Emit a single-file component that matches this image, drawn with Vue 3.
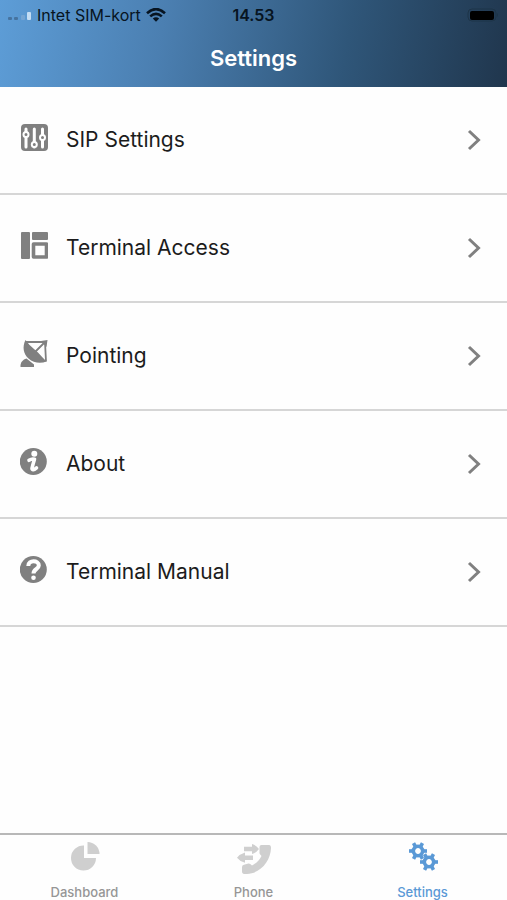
<script setup>
import { ref } from 'vue'

const items = [
  { id: 'sip', label: 'SIP Settings' },
  { id: 'access', label: 'Terminal Access' },
  { id: 'pointing', label: 'Pointing' },
  { id: 'about', label: 'About' },
  { id: 'manual', label: 'Terminal Manual' },
]
const tabs = [
  { id: 'dashboard', label: 'Dashboard' },
  { id: 'phone', label: 'Phone' },
  { id: 'settings', label: 'Settings' },
]
const active = ref('settings')
const gears = [{ x: 13, y: 9 }, { x: 24, y: 20 }]
const teeth = [0, 60, 120, 180, 240, 300]
</script>

<template>
  <div class="screen">
    <header class="top">
      <div class="status">
        <div class="carrier">
          <svg class="signal" width="24" height="12" viewBox="0 0 24 12" aria-hidden="true">
            <rect x="0" y="8" width="4" height="3" rx="1" fill="#46739f" />
            <rect x="6" y="8" width="4" height="3" rx="1" fill="#46739f" />
            <rect x="13" y="6" width="4" height="5" rx="1" fill="#75a5d3" />
            <rect x="19" y="3" width="4" height="8" rx="1" fill="#c3ddf4" />
          </svg>
          <span>Intet SIM-kort</span>
          <svg class="wifi" width="20" height="14" viewBox="0 0 20 14" aria-hidden="true">
            <path d="M1 5.2Q10-3 19 5.2M4.2 8.4Q10 3.2 15.8 8.4" fill="none" stroke="#071421" stroke-width="2.6" />
            <path d="M6.8 10.6Q10 7.8 13.2 10.6L10 13.8Z" fill="#071421" />
          </svg>
        </div>
        <time class="clock">14.53</time>
        <svg class="battery" width="32" height="14" viewBox="0 0 32 14" aria-hidden="true">
          <rect x="1" y="1" width="28" height="12" rx="4" fill="none" stroke="#1d3448" />
          <rect x="3" y="3" width="24" height="9" rx="2" fill="#000" />
          <path d="M30 5v4q2-2 0-4" fill="#1d3448" />
        </svg>
      </div>
      <h1>Settings</h1>
    </header>

    <main>
      <ul class="list">
        <li v-for="item in items" :key="item.id">
          <a class="row" :href="'#' + item.id">
            <svg class="icon" width="28" height="28" viewBox="0 0 28 28" aria-hidden="true">
              <template v-if="item.id === 'sip'">
                <rect x="1" y="0" width="27" height="27" rx="4" fill="#808080" />
                <path d="M6 5v18M14.3 5v18M22.5 5v18" stroke="#fff" stroke-width="3" stroke-linecap="round" />
                <g fill="#808080" stroke="#fff" stroke-width="2">
                  <circle cx="6" cy="10.5" r="2.5" />
                  <circle cx="14.3" cy="20.5" r="2.5" />
                  <circle cx="22.5" cy="13.5" r="2.5" />
                </g>
              </template>
              <g v-else-if="item.id === 'access'">
                <rect x="1" y="0" width="9" height="27" rx="1" fill="#808080" />
                <rect x="12" y="0" width="16" height="8" rx="1" fill="#808080" />
                <rect x="13.5" y="12" width="13" height="13" fill="none" stroke="#808080" stroke-width="3.6" stroke-linejoin="round" />
              </g>
              <g v-else-if="item.id === 'pointing'" fill="#808080">
                <path d="M5.5 0C2 7 3.500 14 8.500 18.500 13.500 23 20.500 24 26.500 21.500Q22 17 18 12.500L14 9Q9 5 5.500 0Z" />
                <path d="M.5 27C0 22.500 3 19.500 6.500 18.500L14 24.500V27Z" />
                <path d="M5.500 2H25L26 21.500M14 13L25 2" fill="none" stroke="#808080" stroke-width="1.8" />
                <path d="M21 1L27.500 0 26.500 7Z" />
              </g>
              <g v-else-if="item.id === 'about'">
                <circle cx="13.3" cy="13.500" r="13.500" fill="#808080" />
                <circle cx="14.3" cy="5.800" r="3" fill="#fff" />
                <path d="M9 12.300Q12 10.500 14.500 11.300 13 16 12 20.300 12.200 23.500 16.500 19.800" fill="none" stroke="#fff" stroke-width="3.600" stroke-linecap="round" stroke-linejoin="round" />
              </g>
              <g v-else>
                <circle cx="13.3" cy="13.500" r="13.500" fill="#808080" />
                <path d="M8.300 10C8.300 3.500 18.800 4 18.800 9.500 18.800 13.500 13.700 12.500 13.500 17.500" fill="none" stroke="#fff" stroke-width="4" />
                <circle cx="13.5" cy="21.800" r="2.300" fill="#fff" />
              </g>
            </svg>
            <span class="label">{{ item.label }}</span>
            <svg width="16" height="22" viewBox="0 0 16 22" aria-hidden="true">
              <path d="M2 2L11.500 11 2 20" fill="none" stroke="#808080" stroke-width="3" />
            </svg>
          </a>
        </li>
      </ul>
    </main>

    <nav class="tabs">
      <button
        v-for="tab in tabs"
        :key="tab.id"
        type="button"
        class="tab"
        :class="{ active: active === tab.id }"
        @click="active = tab.id"
      >
        <svg width="36" height="34" viewBox="0 0 36 34" aria-hidden="true">
          <g v-if="tab.id === 'dashboard'" fill="currentColor">
            <path d="M17 3.500V16H29A12.500 12.500 0 1 1 17 3.500Z" />
            <path d="M20.500 0A12 12 0 0 1 32.500 12H20.500Z" />
          </g>
          <g v-else-if="tab.id === 'phone'" fill="currentColor">
            <path d="M23.500 5Q23.500 3 25.500 3H33Q35 3 35 6C34.500 19 25 31 11 32 8 32.300 6 32 6 29.500V25Q6 23 8 22.700L12.500 21.500Q14 21.300 16 23.500C20 21.500 23.500 18 25.500 14L23.800 12Q23.300 11 23.500 10Z" />
            <path d="M8 4.800H16V2Q20 3 23 7 20 11 16 12V9.300H8Z" />
            <path d="M17 13.500H9V10.500Q4 12 1 15.700 4 19.500 9 20.800V18H17Z" />
          </g>
          <g v-else fill="none" stroke="currentColor">
            <g v-for="g in gears" :key="g.x" :transform="`translate(${g.x} ${g.y})`">
              <circle r="4.700" stroke-width="3.600" />
              <path v-for="t in teeth" :key="t" d="M5.500 0H9" stroke-width="3.600" :transform="`rotate(${t})`" />
            </g>
          </g>
        </svg>
        <span>{{ tab.label }}</span>
      </button>
    </nav>
  </div>
</template>

<style>
body {
  margin: 0;
  background: #fefefe;
}
</style>

<style scoped>
.screen {
  min-height: 100vh;
  display: flex;
  flex-direction: column;
  font-family: Inter, "Liberation Sans", sans-serif;
  color: #1c1c1c;
}
.top {
  background: linear-gradient(100deg, #5d9dd7 0%, #4b7fb1 32%, #2f5679 68%, #20364d 100%);
  padding-bottom: 15px;
}
.status {
  display: grid;
  grid-template-columns: 1fr auto 1fr;
  align-items: center;
  height: 30px;
  padding: 0 8px;
  font-size: 16px;
  color: #071421;
}
.carrier {
  display: flex;
  align-items: center;
  gap: 5px;
  white-space: nowrap;
}
.clock {
  font-weight: 600;
}
.battery {
  justify-self: end;
}
h1 {
  margin: 0;
  padding-top: 14px;
  font-size: 22px;
  line-height: 28px;
  font-weight: 600;
  text-align: center;
  color: #fff;
}
main {
  flex: 1;
}
.list {
  list-style: none;
  margin: 0;
  padding: 0;
}
.row {
  display: flex;
  align-items: center;
  gap: 18px;
  padding: 37px 24px 37px 20px;
  border-bottom: 2px solid #d6d6d6;
  font-size: 21px;
  line-height: 30px;
  color: inherit;
  text-decoration: none;
}
.icon {
  padding-bottom: 4px;
}
.label {
  flex: 1;
}
.tabs {
  display: grid;
  grid-template-columns: repeat(3, 1fr);
  border-top: 2px solid #b8b8b8;
}
.tab {
  display: flex;
  flex-direction: column;
  align-items: center;
  gap: 8px;
  padding: 7px 0 0;
  border: 0;
  background: none;
  font: inherit;
  font-size: 13px;
  font-weight: 500;
  line-height: 16px;
  color: #969696;
}
.tab svg {
  color: #cfcfcf;
}
.tab.active,
.tab.active svg {
  color: #5a99d6;
}
</style>
